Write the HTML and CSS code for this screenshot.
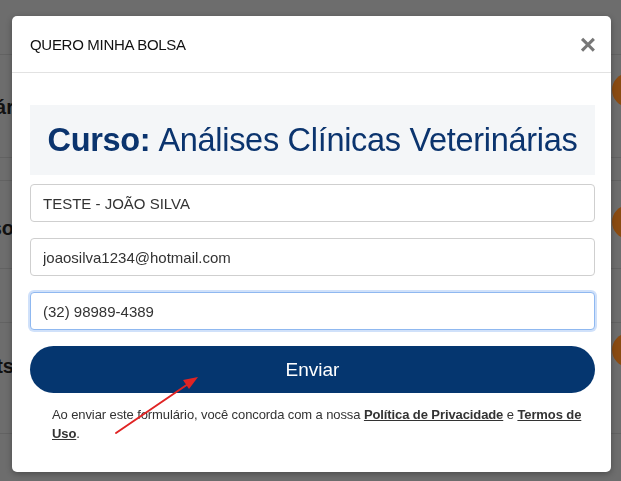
FILE: index.html
```html
<!DOCTYPE html>
<html lang="pt-BR">
<head>
<meta charset="UTF-8">
<meta name="viewport" content="width=device-width, initial-scale=1.0">
<title>Quero minha bolsa</title>
<link rel="stylesheet" href="styles.css">
</head>
<body>
<div class="page">
  <div class="row row-top"></div>
  <div class="row row-a"><b class="label">Veterinár</b><span class="dot"></span></div>
  <div class="row row-gap"></div>
  <div class="row row-b"><b class="label">Curso</b><span class="dot"></span></div>
  <div class="row row-gap2"></div>
  <div class="row row-c"><b class="label">Pets</b><span class="dot"></span></div>
  <div class="row row-d"></div>
</div>

<div class="modal">
  <div class="modal-header">
    <h4 class="modal-title">QUERO MINHA BOLSA</h4>
    <span class="close">&times;</span>
  </div>
  <div class="modal-body">
    <div class="course"><b>Curso:</b> Análises Clínicas Veterinárias</div>
    <form class="lead-form">
      <input class="field" type="text" value="TESTE - JOÃO SILVA">
      <input class="field" type="email" value="joaosilva1234@hotmail.com">
      <input class="field focus" type="tel" value="(32) 98989-4389">
      <button class="send" type="button">Enviar</button>
    </form>
    <p class="terms">Ao enviar este formulário, você concorda com a nossa <a href="#">Política de Privacidade</a> e <a href="#">Termos de Uso</a>.</p>
  </div>
  <!-- seta de anotação -->
  <svg class="arrow" width="599" height="455" viewBox="0 0 599 455">
    <line x1="104" y1="417" x2="179" y2="366" stroke="#e02424" stroke-width="2" stroke-linecap="round"/>
    <polygon points="186,361 171,364 177,373" fill="#e02424"/>
  </svg>
</div>
</body>
</html>
```

FILE: styles.css
```css
* {
  box-sizing: border-box;
}

body {
  margin: 0;
  height: 100vh;
  background-color: #6d6d6d;
  font-family: "Liberation Sans", Arial, sans-serif;
  color: #333;
  overflow: hidden;
}

/* página por trás do modal (escurecida) */
.page {
  display: flex;
  flex-direction: column;
}

.row {
  display: flex;
  align-items: flex-start;
  justify-content: space-between;
  border-bottom: 1px solid #626262;
  font-size: 20px;
  line-height: 24px;
  color: #111;
}

.label {
  width: 14px;
  display: flex;
  justify-content: flex-end;
  overflow: hidden;
  white-space: nowrap;
}

.row-top { height: 55px; }
.row-a { height: 103px; }
.row-gap { height: 23px; }
.row-b { height: 88px; }
.row-gap2 { height: 54px; }
.row-c { height: 111px; }
.row-d { height: 40px; border-bottom: none; }

.row-a .label { margin-top: 40px; }
.row-a .dot { margin-top: 18px; }
.row-b .label { margin-top: 35px; }
.row-b .dot { margin-top: 24px; }
.row-c .label { margin-top: 31px; }
.row-c .dot { margin-top: 10px; }

.dot {
  width: 34px;
  height: 34px;
  border-radius: 50%;
  background-color: #8a4b12;
  margin-right: -25px;
}

/* modal */
.modal {
  position: fixed;
  left: 12px;
  top: 16px;
  width: 599px;
  background-color: #fff;
  border-radius: 5px;
  box-shadow: 0 2px 6px rgba(0, 0, 0, 0.3);
}

.modal-header {
  height: 57px;
  display: flex;
  align-items: center;
  justify-content: space-between;
  padding: 0 15px 0 18px;
  border-bottom: 1px solid #e2e2e2;
}

.modal-title {
  margin: 0;
  font-size: 15px;
  font-weight: normal;
  color: #111;
  letter-spacing: -0.3px;
}

.close {
  font-size: 28px;
  font-weight: bold;
  color: #777;
  line-height: 1;
  margin-top: 2px;
}

.modal-body {
  padding: 32px 16px 29px 18px;
}

.course {
  height: 70px;
  display: flex;
  align-items: center;
  justify-content: center;
  background-color: #f4f6f8;
  color: #0b346e;
  font-size: 32.5px;
  letter-spacing: -0.3px;
  margin-bottom: 9px;
}

.course b {
  margin-right: 8px;
}

.lead-form {
  display: flex;
  flex-direction: column;
  gap: 16px;
}

.field {
  height: 38px;
  border: 1px solid #cfcfcf;
  border-radius: 4px;
  padding: 0 12px;
  font-family: inherit;
  font-size: 15px;
  color: #333;
  outline: none;
}

.field.focus {
  border-color: #8fb8f0;
  box-shadow: 0 0 0 2px rgba(120, 170, 240, 0.35);
}

.send {
  height: 47px;
  border: none;
  border-radius: 24px;
  background-color: #05366f;
  color: #fff;
  font-family: inherit;
  font-size: 19px;
}

.terms {
  margin: 12px 0 0;
  padding: 0 4px 0 22px;
  font-size: 13px;
  line-height: 19px;
  letter-spacing: -0.1px;
  color: #333;
}

.terms a {
  color: #333;
  font-weight: bold;
}

.arrow {
  position: absolute;
  left: 0;
  top: 0;
  pointer-events: none;
}
```
